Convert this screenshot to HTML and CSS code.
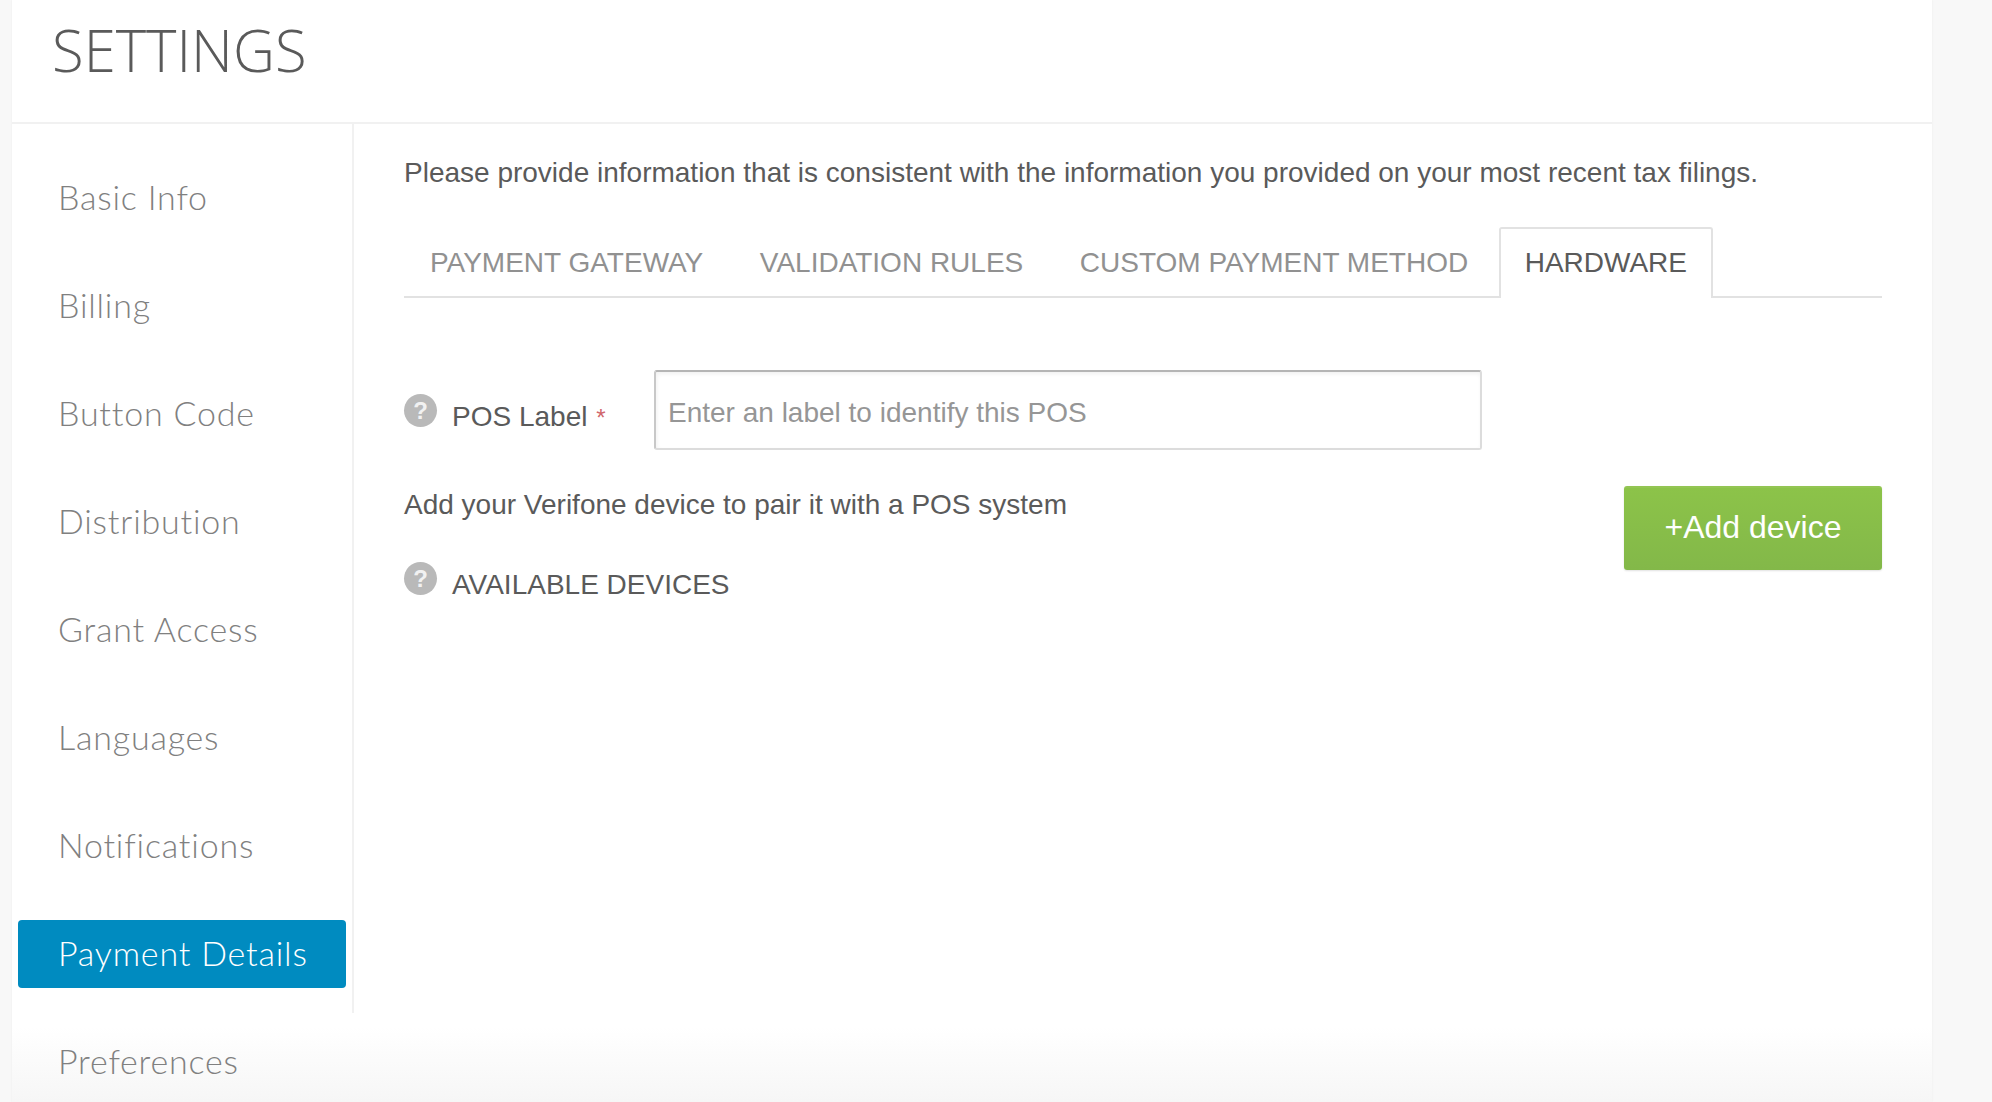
FILE: index.html
```html
<!DOCTYPE html>
<html lang="en">
<head>
<meta charset="utf-8">
<title>Settings</title>
<link rel="stylesheet" href="styles.css">
</head>
<body>
<div class="card">
  <header class="head"><h1 class="title">SETTINGS</h1></header>
  <div class="columns">
    <nav class="side">
      <a class="item">Basic Info</a>
      <a class="item">Billing</a>
      <a class="item">Button Code</a>
      <a class="item">Distribution</a>
      <a class="item">Grant Access</a>
      <a class="item">Languages</a>
      <a class="item">Notifications</a>
      <a class="item active">Payment Details</a>
      <a class="item">Preferences</a>
    </nav>
    <main class="main">
      <p class="intro">Please provide information that is consistent with the information you provided on your most recent tax filings.</p>
      <div class="tabs">
        <a class="tab">PAYMENT GATEWAY</a>
        <a class="tab">VALIDATION RULES</a>
        <a class="tab">CUSTOM PAYMENT METHOD</a>
        <a class="tab current">HARDWARE</a>
      </div>
      <div class="field">
        <span class="help">?</span>
        <label class="label">POS Label <span class="req">*</span></label>
        <input class="input" type="text" placeholder="Enter an label to identify this POS">
      </div>
      <div class="devices">
        <div class="devices-text">
          <p class="pair">Add your Verifone device to pair it with a POS system</p>
          <div class="avail"><span class="help">?</span><span class="label">AVAILABLE DEVICES</span></div>
        </div>
        <button class="add" type="button">+Add device</button>
      </div>
    </main>
  </div>
</div>
</body>
</html>
```
FILE: styles.css
```css
* { box-sizing: border-box; }
html, body { height: 100%; }
body {
  margin: 0;
  background: #f8f8f8;
  overflow: hidden;
  font-family: "Liberation Sans", Arial, sans-serif;
  color: #5a5a5a;
}
.card {
  margin-left: 12px;
  width: 1920px;
  height: 1102px;
  background: linear-gradient(#fff calc(100% - 75px), #f6f6f6);
  box-shadow: 0 0 2px rgba(0,0,0,.06);
}
.head {
  height: 124px;
  border-bottom: 2px solid #f1f1f1;
  padding-left: 40px;
  display: flex;
  align-items: center;
}
.title {
  margin: 0 0 23px;
  font: 300 58px/1 "Open Sans", sans-serif;
  color: #5a5a5a;
}
.columns { display: flex; align-items: flex-start; }
.side {
  width: 342px;
  height: 889px;
  border-right: 2px solid #f1f1f1;
  padding: 40px 0 0 6px;
  display: flex;
  flex-direction: column;
  gap: 40px;
  flex: none;
}
.item {
  flex: none;
  width: 328px;
  height: 68px;
  padding-left: 40px;
  border-radius: 4px;
  font: 300 34px/66px Lato, sans-serif;
  color: #808080;
  letter-spacing: .8px;
}
.item.active { background: #008bc0; color: #fff; }
.main { flex: 1; padding: 0 50px; }
.intro { margin: 32px 0 0; font-size: 28px; line-height: 34px; color: #5a5a5a; }
.tabs {
  margin-top: 37px;
  height: 71px;
  display: flex;
  gap: 4.5px;
  border-bottom: 2px solid #e2e2e2;
}
.tab {
  height: 71px;
  padding: 0 24px;
  font-size: 28px;
  line-height: 67px;
  color: #919191;
  border: 2px solid transparent;
  border-bottom: 0;
}
.tab.current {
  color: #5a5a5a;
  background: #fff;
  border-color: #e2e2e2;
  border-radius: 3px 3px 0 0;
}
.field {
  margin-top: 72px;
  display: flex;
  align-items: flex-start;
}
.help {
  flex: none;
  width: 33px;
  height: 33px;
  border-radius: 50%;
  background: #b9b9b9;
  color: #f1f1f1;
  font: bold 24px/33px "Liberation Sans", sans-serif;
  text-align: center;
}
.field .help { margin-top: 24px; }
.label {
  font-size: 28px;
  line-height: 34px;
  margin-left: 15px;
  color: #5a5a5a;
}
.field .label { width: 202px; margin-top: 30px; flex: none; }
.req { color: #d0666b; font-size: 24px; margin-left: 1px; }
.input {
  width: 828px;
  height: 80px;
  border: 2px solid #dcdcdc;
  border-top-color: #b5b5b5;
  border-left-color: #c8c8c8;
  border-radius: 3px;
  padding: 6px 12px 0;
  font: 28px "Liberation Sans", sans-serif;
  box-shadow: inset 1px 2px 4px rgba(0,0,0,.06);
}
.input::placeholder { color: #969696; opacity: 1; }
.devices {
  margin-top: 36px;
  display: flex;
  justify-content: space-between;
  align-items: flex-start;
}
.pair { margin: 2px 0 0; font-size: 28px; line-height: 34px; color: #5a5a5a; }
.avail { margin-top: 40px; display: flex; align-items: flex-start; }
.avail .label { margin-top: 6px; }
.add {
  width: 258px;
  height: 84px;
  border: 0;
  border-radius: 3px;
  padding: 0 0 4px;
  color: #fff;
  font: 32px "Liberation Sans", sans-serif;
  background: linear-gradient(#8cc349, #83b849);
  border-top: 2px solid #93c553;
  box-shadow: 0 1px 2px rgba(0,0,0,.12);
}
```
